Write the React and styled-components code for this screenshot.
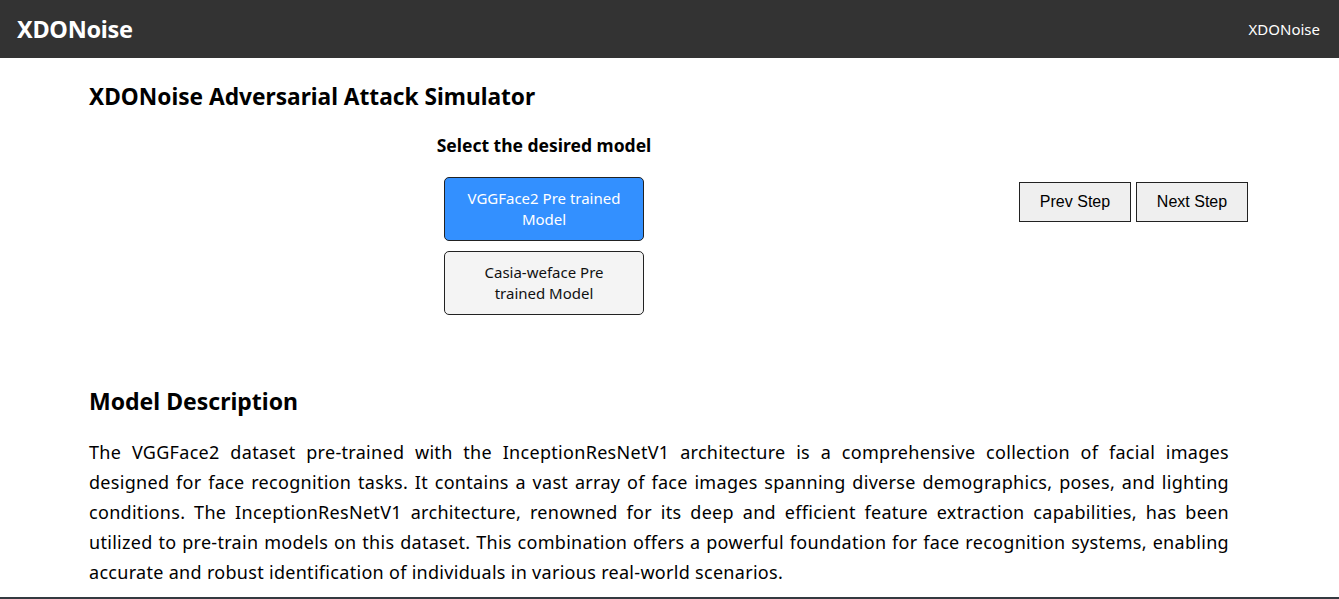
import React from 'react';
import styled, { createGlobalStyle } from 'styled-components';

const GlobalStyle = createGlobalStyle`
  body {
    margin: 0;
    font-family: 'Noto Sans', 'Open Sans', sans-serif;
    background: #ffffff;
    color: #000;
  }
`;

const models = [
  { id: 'vgg', label: 'VGGFace2 Pre trained Model', active: true },
  { id: 'casia', label: 'Casia-weface Pre trained Model', active: false },
];

const description = `The VGGFace2 dataset pre-trained with the InceptionResNetV1 architecture is a comprehensive collection of facial images designed for face recognition tasks. It contains a vast array of face images spanning diverse demographics, poses, and lighting conditions. The InceptionResNetV1 architecture, renowned for its deep and efficient feature extraction capabilities, has been utilized to pre-train models on this dataset. This combination offers a powerful foundation for face recognition systems, enabling accurate and robust identification of individuals in various real-world scenarios.`;

const App = () => {
  return (
    <>
      <GlobalStyle />
      <Navbar>
        <Brand>XDONoise</Brand>
        <NavLink>XDONoise</NavLink>
      </Navbar>

      <Main>
        <PageTitle>XDONoise Adversarial Attack Simulator</PageTitle>

        <ControlRow>
          <ModelPicker>
            <PickerLabel>Select the desired model</PickerLabel>
            {models.map(m => (
              <ModelButton key={m.id} active={m.active}>{m.label}</ModelButton>
            ))}
          </ModelPicker>
          <StepButtons>
            <StepButton>Prev Step</StepButton>
            <StepButton>Next Step</StepButton>
          </StepButtons>
        </ControlRow>

        <SectionTitle>Model Description</SectionTitle>
        <Description>{description}</Description>
      </Main>

      <Footer />
    </>
  );
};

export default App;

const Navbar = styled.nav`
  height: 58px;
  background-color: #333333;
  display: flex;
  align-items: center;
  justify-content: space-between;
  padding: 0 19px 0 17px;
`;

const Brand = styled.span`
  color: #fff;
  font-size: 23.5px;
  font-weight: 700;
  letter-spacing: -0.3px;
`;

const NavLink = styled.span`
  color: #fff;
  font-size: 15px;
`;

const Main = styled.main`
  padding: 22px 110px 0 89px;
`;

const PageTitle = styled.h2`
  font-size: 22.7px;
  font-weight: 700;
  margin: 0 0 19px 0;
  line-height: 34px;
`;

const ControlRow = styled.div`
  display: flex;
  align-items: flex-start;
  min-height: 251px;
`;

const ModelPicker = styled.div`
  display: flex;
  flex-direction: column;
  align-items: center;
  margin-left: 335px;
  width: 240px;
`;

const PickerLabel = styled.div`
  font-size: 17.5px;
  font-weight: 700;
  margin-bottom: 20px;
`;

const ModelButton = styled.button`
  width: 200px;
  height: 64px;
  margin-bottom: 10px;
  border: 1px solid #222;
  border-radius: 5px;
  font-family: 'Noto Sans', 'Open Sans', sans-serif;
  font-size: 15px;
  line-height: 21px;
  padding: 0 14px;
  color: ${({ active }) => (active ? '#ffffff' : '#111')};
  background-color: ${({ active }) => (active ? '#3390ff' : '#f4f4f4')};
  cursor: pointer;
`;

const StepButtons = styled.div`
  display: flex;
  gap: 5px;
  margin-left: auto;
  margin-right: -19px;
  margin-top: 49px;
`;

const StepButton = styled.button`
  width: 112px;
  height: 40px;
  border: 1px solid #222;
  background-color: #efefef;
  font-family: 'Liberation Sans', Arial, sans-serif;
  font-size: 16px;
  color: #000;
  cursor: pointer;
`;

const SectionTitle = styled.h2`
  font-size: 23px;
  font-weight: 700;
  margin: 0 0 19px 0;
  line-height: 34px;
`;

const Description = styled.p`
  margin: 0;
  font-size: 18px;
  letter-spacing: 0.3px;
  line-height: 30px;
  text-align: justify;
`;

const Footer = styled.footer`
  margin-top: 10px;
  height: 60px;
  background-color: #343a40;
`;
